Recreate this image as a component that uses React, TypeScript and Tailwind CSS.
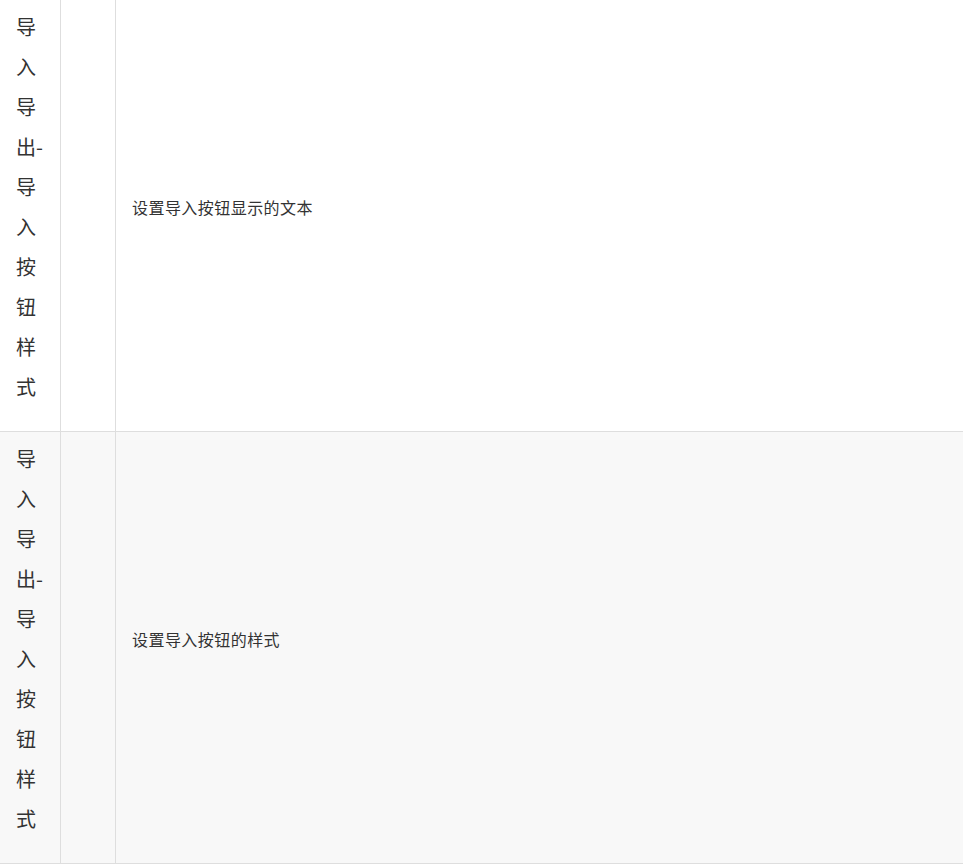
import React from "react";

const rows = [
  { name: "导入导出-导入按钮样式", desc: "设置导入按钮显示的文本", bg: "bg-white" },
  { name: "导入导出-导入按钮样式", desc: "设置导入按钮的样式", bg: "bg-[#f8f8f8]" },
];

export default function App() {
  return (
    <div
      className="w-[963px] bg-white text-[#333333]"
      style={{ fontFamily: '"Noto Sans CJK SC", "Noto Sans", sans-serif' }}
    >
      {rows.map((r, i) => (
        <div
          key={i}
          className={`grid grid-cols-[61px_55px_1fr] border-b border-[#dedede] ${r.bg}`}
        >
          <div className="border-r border-[#dedede] pl-4 pr-3 pt-[7px] pb-[24px] text-[20px] leading-[40px]">
            {r.name}
          </div>
          <div className="border-r border-[#dedede]" />
          <div className="flex items-center pl-4 pb-[17px] text-[16px] leading-6 tracking-[0.45px]">
            {r.desc}
          </div>
        </div>
      ))}
    </div>
  );
}
